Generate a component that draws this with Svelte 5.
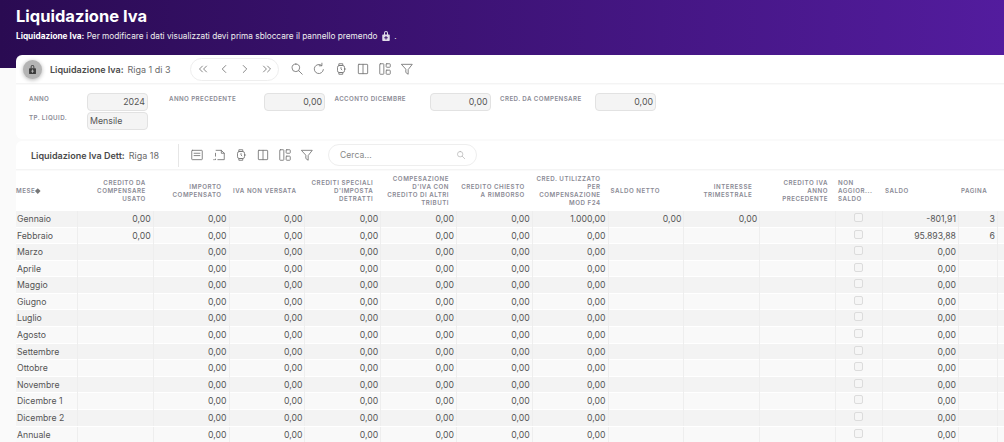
<script>
	const icons = {
		first: 'M11 7l-5 5 5 5M18 7l-5 5 5 5',
		prev: 'M15 6l-6 6 6 6',
		next: 'M9 6l6 6-6 6',
		last: 'M6 7l5 5-5 5M13 7l5 5-5 5',
		search: 'M10 3.5a6.5 6.5 0 1 0 0 13 6.5 6.5 0 0 0 0-13zM15 15l6 6',
		refresh: 'M19.5 13a7.8 7.8 0 1 1-3-7.2M17 2v4.5h-4.5',
		watch: 'M9 3h6v3H9zM9 18h6v3H9zM9 6h6a3 3 0 0 1 3 3v6a3 3 0 0 1-3 3H9a3 3 0 0 1-3-3V9a3 3 0 0 1 3-3zM12 9.5V12l1.5 1.5M18 12h2',
		columns: 'M5 4h14a1 1 0 0 1 1 1v14a1 1 0 0 1-1 1H5a1 1 0 0 1-1-1V5a1 1 0 0 1 1-1zM12 4v16',
		layout: 'M4 3h5a1 1 0 0 1 1 1v16a1 1 0 0 1-1 1H4a1 1 0 0 1-1-1V4a1 1 0 0 1 1-1zM15 3h5a1 1 0 0 1 1 1v4a1 1 0 0 1-1 1h-5a1 1 0 0 1-1-1V4a1 1 0 0 1 1-1zM15 14h5a1 1 0 0 1 1 1v5a1 1 0 0 1-1 1h-5a1 1 0 0 1-1-1v-5a1 1 0 0 1 1-1z',
		filter: 'M3 4h18l-7 9v8l-4-3v-5z',
		form: 'M4 4h16a1 1 0 0 1 1 1v14a1 1 0 0 1-1 1H4a1 1 0 0 1-1-1V5a1 1 0 0 1 1-1zM7 9h10M7 13h10',
		page: 'M7 4h9l5 5v11H10M16 4v5h5M6 9v5M6 19v1M3 20h1'
	};

	const columns = [
		{ label: ['Mese'], left: true, sort: true },
		{ label: ['Credito da', 'compensare', 'usato'] },
		{ label: ['Importo', 'compensato'] },
		{ label: ['Iva non versata'], tight: true },
		{ label: ['Crediti speciali', "d'imposta", 'detratti'] },
		{ label: ['Compesazione', "d'iva con", 'credito di altri', 'tributi'] },
		{ label: ['Credito chiesto', 'a rimborso'] },
		{ label: ['Cred. utilizzato', 'per', 'compensazione', 'mod F24'] },
		{ label: ['Saldo netto'], left: true },
		{ label: ['Interesse', 'trimestrale'] },
		{ label: ['Credito iva', 'anno', 'precedente'] },
		{ label: ['Non', 'aggior...', 'saldo'], left: true },
		{ label: ['Saldo'], left: true },
		{ label: ['Pagina'], left: true }
	];

	const z = '0,00';
	const rows = [
		['Gennaio', z, z, z, z, z, z, '1.000,00', z, z, '', '-801,91', '3'],
		['Febbraio', z, z, z, z, z, z, z, '', '', '', '95.893,88', '6'],
		...[
			'Marzo',
			'Aprile',
			'Maggio',
			'Giugno',
			'Luglio',
			'Agosto',
			'Settembre',
			'Ottobre',
			'Novembre',
			'Dicembre 1',
			'Dicembre 2',
			'Annuale'
		].map((m) => [m, '', z, z, z, z, z, z, '', '', '', z, ''])
	];
</script>

{#snippet icon(name)}
	<svg class="icon" viewBox="0 0 24 24"><path d={icons[name]} /></svg>
{/snippet}

{#snippet lock(cls)}
	<svg class={cls} viewBox="0 0 24 24">
		<path d="M8 10V6a4 4 0 0 1 8 0v4h-2V6a2 2 0 0 0-4 0v4z" />
		<path d="M6 9h12a1.5 1.5 0 0 1 1.5 1.5v10A1.5 1.5 0 0 1 18 22H6a1.500 1.500 0 0 1-1.500-1.500v-10A1.500 1.500 0 0 1 6 9zM11 12v2.500H8.500v2H11V19h2v-2.500h2.500v-2H13V12z" fill-rule="evenodd" />
	</svg>
{/snippet}

<div class="page">
	<header class="hero">
		<h1>Liquidazione Iva</h1>
		<p>
			<b>Liquidazione Iva:</b> Per modificare i dati visualizzati devi prima sbloccare il pannello premendo
			{@render lock('lock-small')} .
		</p>
	</header>

	<main class="content">
		<section class="toolbar">
			<button class="lock-btn">{@render lock('lock-big')}</button>
			<span class="title">Liquidazione Iva:</span>
			<span class="count">Riga 1 di 3</span>
			<div class="nav">
				{#each ['first', 'prev', 'next', 'last'] as n}
					{@render icon(n)}
				{/each}
			</div>
			<div class="tools">
				{#each ['search', 'refresh', 'watch', 'columns', 'layout', 'filter'] as n}
					{@render icon(n)}
				{/each}
			</div>
		</section>

		<section class="form">
			<div class="form-row">
				<div class="field first"><span>Anno</span><div class="input num">2024</div></div>
				<div class="field"><span>Anno precedente</span><div class="input num">0,00</div></div>
				<div class="field"><span>Acconto dicembre</span><div class="input num">0,00</div></div>
				<div class="field"><span>Cred. da compensare</span><div class="input num">0,00</div></div>
			</div>
			<div class="form-row">
				<div class="field first"><span>Tp. liquid.</span><div class="input">Mensile</div></div>
			</div>
		</section>

		<section class="toolbar detail">
			<span class="title">Liquidazione Iva Dett:</span>
			<span class="count">Riga 18</span>
			<div class="sep"></div>
			<div class="tools">
				{#each ['form', 'page', 'watch', 'columns', 'layout', 'filter'] as n}
					{@render icon(n)}
				{/each}
			</div>
			<div class="search">
				<span>Cerca...</span>
				{@render icon('search')}
			</div>
		</section>

		<section class="grid">
			<div class="row head">
				{#each columns as col}
					<div class="th" class:left={col.left} class:tight={col.tight}>
						<div>
							{#each col.label as line}
								<div>{line}{#if col.sort}<i class="sort"></i>{/if}</div>
							{/each}
						</div>
					</div>
				{/each}
			</div>
			{#each rows as row}
				<div class="row body">
					<div class="td month">{row[0]}</div>
					{#each row.slice(1, 11) as value}
						<div class="td">{value}</div>
					{/each}
					<div class="td check"><span class="box"></span></div>
					<div class="td">{row[11]}</div>
					<div class="td">{row[12]}</div>
				</div>
			{/each}
		</section>
	</main>
</div>

<style>
	:global(body) {
		margin: 0;
		background: #fafafa;
	}

	.page {
		width: 1004px;
		height: 442px;
		overflow: hidden;
		font-family: Inter, 'Liberation Sans', sans-serif;
		color: #555;
		background: #fafafa;
	}

	.hero {
		height: 68px;
		box-sizing: border-box;
		padding: 6px 16px 0;
		color: #fff;
		background: linear-gradient(90deg, #2a0b52, #531c9e);
	}

	h1 {
		margin: 0;
		font-size: 16.5px;
		line-height: 20px;
		font-weight: 700;
	}

	.hero p {
		margin: 4px 0 0;
		font-size: 8.25px;
		line-height: 12px;
		color: #eee;
	}

	.hero b {
		color: #fff;
	}

	.lock-small {
		width: 12px;
		height: 12px;
		fill: #e0dce8;
		vertical-align: -3px;
	}

	.content {
		margin: -13px 0 0 16px;
		position: relative;
	}

	.toolbar {
		display: flex;
		align-items: center;
		height: 28px;
		background: #fff;
		border-radius: 6px 0 0 0;
		border-bottom: 1px solid #f4f4f4;
		font-size: 9px;
	}

	.lock-btn {
		width: 19px;
		height: 19px;
		margin-left: 7px;
		padding: 0;
		border: 0;
		border-radius: 50%;
		background: #b4b4b4;
		box-shadow: 0 1px 4px rgba(0, 0, 0, 0.3);
		display: flex;
		align-items: center;
		justify-content: center;
	}

	.lock-big {
		width: 11px;
		height: 11px;
		fill: #3a3a3a;
	}

	.title {
		margin-left: 8px;
		font-weight: 600;
		color: #4a4a4a;
	}

	.count {
		margin-left: 4px;
		color: #6a6a6a;
	}

	.nav {
		display: flex;
		align-items: center;
		justify-content: space-between;
		box-sizing: border-box;
		width: 89px;
		height: 23px;
		margin-left: 19px;
		padding: 0 4px 0 5px;
		border: 1px solid #eee;
		border-radius: 12px;
	}

	.tools {
		display: flex;
		align-items: center;
		gap: 8px;
		margin-left: 11px;
	}

	.icon {
		width: 14px;
		height: 14px;
		flex: none;
		fill: none;
		stroke: #777;
		stroke-width: 1.5;
		stroke-linecap: round;
		stroke-linejoin: round;
	}

	.form {
		height: 54px;
		margin-top: 1px;
		padding-top: 8px;
		box-sizing: border-box;
		background: #fff;
		border-radius: 0 0 0 6px;
	}

	.form-row {
		display: flex;
		gap: 9.5px;
		height: 19px;
		padding-left: 13px;
	}

	.field {
		display: flex;
		width: 156px;
	}

	.field.first {
		width: 119px;
		margin-right: 11.500px;
	}

	.field span {
		flex: 1;
		padding-top: 2px;
		font-size: 6.2px;
		line-height: 8px;
		font-weight: 600;
		letter-spacing: 0.4px;
		text-transform: uppercase;
		color: #8a8a94;
	}

	.input {
		box-sizing: border-box;
		width: 61px;
		height: 18px;
		padding: 0 2px;
		border: 1px solid #e2e2e2;
		border-radius: 4px;
		background: #f4f4f4;
		font-size: 8.800px;
		line-height: 16px;
		color: #555;
	}

	.num {
		text-align: right;
	}

	.toolbar.detail {
		height: 28px;
		margin-top: 2px;
		border-radius: 6px 0 0 0;
	}

	.detail .title {
		margin-left: 15px;
	}

	.sep {
		width: 1px;
		height: 23px;
		margin-left: 19px;
		background: #e6e6e6;
	}

	.detail .tools {
		margin-left: 11px;
	}

	.search {
		display: flex;
		align-items: center;
		justify-content: space-between;
		box-sizing: border-box;
		width: 149px;
		height: 22px;
		margin-left: 14px;
		padding: 0 10px 0 11px;
		border: 1px solid #eee;
		border-radius: 11px;
		color: #888;
		font-size: 8.600px;
	}

	.search .icon {
		width: 10px;
		height: 10px;
		stroke: #aaa;
	}

	.grid {
		margin-top: 1px;
		margin-left: 0;
	}

	.row {
		display: grid;
		grid-template-columns: 62px repeat(10, 75.8px) 47px 76px 39px 6px;
	}

	.head {
		height: 40px;
		background: #fff;
	}

	.th {
		display: flex;
		align-items: center;
		justify-content: flex-end;
		padding: 0 8px 0 2px;
		font-size: 6.2px;
		line-height: 8.2px;
		font-weight: 600;
		letter-spacing: 0.5px;
		text-transform: uppercase;
		text-align: right;
		color: #8a8a94;
		white-space: nowrap;
	}

	.th.tight {
		padding-right: 9px;
	}

	.th.left {
		justify-content: flex-start;
		text-align: left;
	}

	.th:first-child {
		padding-left: 0;
	}

	.sort {
		display: inline-block;
		width: 3.500px;
		height: 3.500px;
		margin-left: 1px;
		background: #777;
		transform: rotate(45deg);
		vertical-align: 0.5px;
	}

	.body {
		height: 16.58px;
		box-sizing: border-box;
		border-bottom: 1px solid #fff;
		background: #f9f9f9;
	}

	.body:nth-child(even) {
		background: #f3f3f3;
	}

	.td {
		padding-right: 2px;
		border-right: 1px solid #eeeeee;
		font-size: 8.700px;
		line-height: 16.500px;
		text-align: right;
		color: #555;
		white-space: nowrap;
	}

	.td.month {
		padding: 0 0 0 1px;
		text-align: left;
	}

	.td.check {
		display: flex;
		justify-content: center;
		padding: 0;
	}

	.box {
		box-sizing: border-box;
		width: 9px;
		height: 9px;
		margin-top: 2px;
		border: 1px solid #dcdcdc;
		border-radius: 2px;
		background: #f6f6f6;
	}
</style>
